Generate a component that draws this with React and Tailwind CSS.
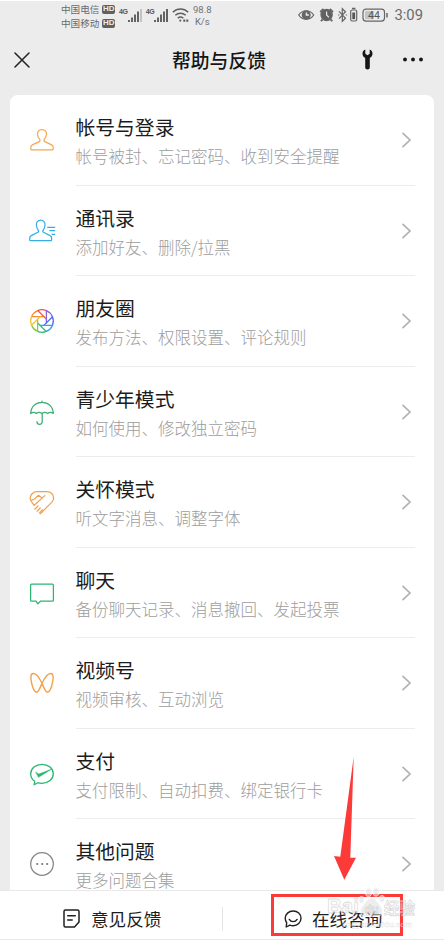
// App.jsx — WeChat help & feedback screen
const TOPICS = [
  { id: 'account', title: '帐号与登录', hint: '帐号被封、忘记密码、收到安全提醒', Icon: PersonIcon },
  { id: 'contacts', title: '通讯录', hint: '添加好友、删除/拉黑', Icon: ContactsIcon },
  { id: 'moments', title: '朋友圈', hint: '发布方法、权限设置、评论规则', Icon: MomentsIcon },
  { id: 'teen', title: '青少年模式', hint: '如何使用、修改独立密码', Icon: UmbrellaIcon },
  { id: 'care', title: '关怀模式', hint: '听文字消息、调整字体', Icon: CareIcon },
  { id: 'chat', title: '聊天', hint: '备份聊天记录、消息撤回、发起投票', Icon: ChatIcon },
  { id: 'channels', title: '视频号', hint: '视频审核、互动浏览', Icon: ChannelsIcon },
  { id: 'pay', title: '支付', hint: '支付限制、自动扣费、绑定银行卡', Icon: PayIcon },
  { id: 'other', title: '其他问题', hint: '更多问题合集', Icon: OtherIcon },
];

/* Row icons, all on a 28px grid */
function Glyph({ color, width = 1.25, children }) {
  return (
    <svg className="block w-7 h-7 overflow-visible" viewBox="0 0 28 28" fill="none" stroke={color} strokeWidth={width} strokeLinecap="round" strokeLinejoin="round">
      {children}
    </svg>
  );
}

function PersonIcon() {
  return (
    <Glyph color="#f5a653">
      <path d="M14 3.500c-3 0-4.700 2.100-4.500 5 .2 2.200 1 3.600 2.300 5.200.5.8.2 1.500-.6 1.900l-6.800 3.300c-1.200.6-1.600 1.300-1.600 2.500v1.700c0 .5.300.7.800.7h20.800c.5 0 .8-.2.8-.7v-1.700c0-1.200-.4-1.900-1.600-2.500l-6.800-3.300c-.8-.4-1.100-1.100-.6-1.900 1.300-1.600 2.100-3 2.300-5.200.2-2.900-1.500-5-4.500-5z" />
    </Glyph>
  );
}

function ContactsIcon() {
  return (
    <Glyph color="#35aee5">
      <path d="M12.700 3.200c-3 0-4.500 2.100-4.300 5 .2 2.200.8 3.600 2 5.200.5.8.2 1.500-.6 1.900L3.300 18.600c-1.200.6-1.600 1.300-1.600 2.500v1.800c0 .5.300.7.800.7h20.300c.5 0 .8-.2.8-.7v-1.800c0-1.200-.4-1.900-1.600-2.500l-6.400-3.300c-.8-.4-1.100-1.100-.6-1.900 1.200-1.600 1.800-3 2-5.200.2-2.900-1.300-5-4.300-5z" />
      <path d="M19.200 10.400h8M21.300 13.700h5.900M23.600 17.300h3.600" strokeLinecap="butt" />
    </Glyph>
  );
}

// clockwise, starting from the left-hand end of the top blade
const BLADES = ['#f98a3c', '#f0564a', '#8d62d8', '#4b6ef0', '#3a9dea', '#35b87a', '#84cc48', '#f7c52e'];

function MomentsIcon() {
  return (
    <Glyph width={1.3}>
      {BLADES.map((color, i) => (
        <path key={color} stroke={color} transform={`rotate(${i * 45} 14 14)`} d="M15.800 9.600H3.600A11.300 11.300 0 0 1 9.760 3.530" />
      ))}
    </Glyph>
  );
}

function UmbrellaIcon() {
  return (
    <Glyph color="#3fae73">
      <path d="M14 3v1.200M2.700 15.500C2.900 8.700 7.700 4.300 14 4.300s11.100 4.400 11.300 11.200c-1.700-1.300-4-1.300-5.600 0-1.700-1.300-4-1.300-5.700 0-1.700-1.300-4-1.300-5.700 0-1.600-1.300-3.900-1.300-5.600 0z" />
      <path d="M14.200 15.500v8c0 1.700-1 2.800-2.600 2.800s-2.600-1-2.600-2.600" />
    </Glyph>
  );
}

function CareIcon() {
  return (
    <Glyph color="#f3a14f">
      <path d="M6.200 17.300l-2.300-3C2.700 12.700 2 11.300 2.200 9.700c0-1.500.9-3 2.100-4.200C5.500 4.300 7 3.700 8.700 3.700h10.600c1.700 0 3.200.6 4.400 1.800 1.200 1.200 1.900 2.700 1.900 4.400 0 1.700-.6 3-1.700 4.200L12.600 25.500" />
      <path d="M2.600 11.700c1.200.6 2.400.3 3.600-.6L10.500 7.300l3.300 2.500M16.800 7.600L6.200 17.300M10 18l-3.200 3.200M12.200 20l-3.200 3.200M14.500 21.800l-3.200 3.300" />
    </Glyph>
  );
}

function ChatIcon() {
  return (
    <Glyph color="#2bb673">
      <path d="M3.600 5h20.800c.6 0 1 .4 1 1v15.200c0 .6-.4 1-1 1H12.500l-2.700 2.700-1.700-2.700H3.600c-.6 0-1-.4-1-1V6c0-.6.4-1 1-1z" />
    </Glyph>
  );
}

function ChannelsIcon() {
  return (
    <Glyph color="#f5a04a" width={1.4}>
      <path d="M14 14.300C11.700 9.500 8.300 4.500 5.300 4.500c-3 0-2.800 4.300-1.800 9 1 4.900 2.800 9.700 5 9.700 2 0 3.400-3.800 5.500-8.900 2.300-4.800 5.700-9.800 8.700-9.800s2.800 4.300 1.800 9c-1 4.900-2.800 9.700-5 9.700-2 0-3.400-3.800-5.500-8.900z" />
    </Glyph>
  );
}

function PayIcon() {
  return (
    <Glyph color="#28b770" width={1.3}>
      <path d="M14 4.300c6.300 0 11.300 4.100 11.300 9.400S20.300 23.300 14 23.300c-1.500 0-2.900-.2-4.200-.6L6.200 24.800l.5-3.500c-2.500-1.700-4-4.400-4-7.600C2.700 8.400 7.700 4.300 14 4.300z" />
      <path d="M7.900 12.300l3 1.800 13-5.100-13.300 8.300z" fill="#28b770" strokeWidth=".5" />
    </Glyph>
  );
}

function OtherIcon() {
  return (
    <Glyph color="#858585">
      <circle cx="14" cy="14" r="11.300" />
      <g fill="#777" stroke="none">
        <circle cx="9.200" cy="14" r="1.100" />
        <circle cx="14.200" cy="14" r="1.100" />
        <circle cx="19.200" cy="14" r="1.100" />
      </g>
    </Glyph>
  );
}

/* Status bar */
function Carrier({ name }) {
  return (
    <div className="flex items-center gap-[3px] h-3.5 text-[9.600px] leading-[14px] whitespace-nowrap text-[#6b6b6b]">
      {name}
      <span className="flex shrink-0 items-center justify-center w-[13px] h-[9px] rounded-[2px] bg-[#606060] font-['Liberation_Sans'] text-[8px] leading-none font-bold text-[#ececec]">HD</span>
    </div>
  );
}

function Signal({ faint }) {
  return (
    <div className="flex items-start">
      <span className="font-['Liberation_Sans'] text-[7px] leading-[8px] font-bold tracking-tighter text-[#555]">4G</span>
      <svg className="w-[15px] h-[15px]" viewBox="0 0 15 15" fill="#646464">
        <rect x="0" y="12" width="2" height="2" />
        <rect x="3" y="9.500" width="2" height="4.500" />
        <rect x="6" y="6.500" width="2" height="7.500" />
        <rect x="9" y="3.500" width="2" height="10.500" />
        <rect x="12" y="1" width="2" height="13" opacity={faint ? 0.3 : 1} />
      </svg>
    </div>
  );
}

function StatusIcons() {
  return (
    <svg className="w-[90px] h-5" viewBox="0 0 90 20" fill="none" stroke="#666" strokeWidth="1.200">
      {/* eye */}
      <path d="M.7 10C4.500 4.300 12 4.300 15.700 10 12 15.700 4.500 15.700.7 10z" />
      <circle cx="8.200" cy="10" r="3.900" fill="#666" />
      <path d="M8.400 7.500v2.500h2.500" stroke="#ececec" strokeWidth="1.400" />
      {/* alarm */}
      <circle cx="28.600" cy="10" r="5.600" fill="#606060" />
      <path d="M22.200 7l3.300-3.200M35 7l-3.300-3.200M24.600 14.500l-1.700 1.700M32.600 14.500l1.700 1.700" strokeWidth="1.800" />
      <path d="M28.600 6.500V10l2.300 2.300" stroke="#ececec" />
      {/* bluetooth and its battery */}
      <path d="M41 6.300l6.500 7-3.200 3V3.700l3.200 3-6.500 7M40 10h1.300M47.800 10h1.300" strokeWidth="1.200" />
      <rect x="52.700" y="5" width="6" height="11" rx="1.500" />
      <path d="M54 3.500h3.400" strokeWidth="1.500" />
      <path d="M54.300 7.500h2.800v6.700h-2.800z" fill="#555" stroke="none" />
      {/* phone battery */}
      <rect x="65" y="4.100" width="21.500" height="12" rx="3" />
      <rect x="67" y="6" width="9" height="8.200" rx="1" fill="#c4c4c4" stroke="none" />
      <path d="M89 8v4.500" strokeWidth="1.500" />
      <text x="70" y="13.800" fill="#555" stroke="none" fontSize="10.500" fontFamily="Roboto, sans-serif">44</text>
    </svg>
  );
}

function StatusBar() {
  return (
    <div className="flex items-start h-[30px] pl-[61px]">
      <div className="w-[55px] shrink-0 pt-px">
        <Carrier name="中国电信" />
        <Carrier name="中国移动" />
      </div>
      <div className="flex gap-[3px] pt-[7px] pl-[3px]">
        <Signal faint />
        <Signal />
      </div>
      <svg className="ml-[3px] mt-[7px] w-[17px] h-[15px]" viewBox="0 0 17 15" fill="none" stroke="#606060" strokeWidth="1.500">
        <path d="M.8 4.300c4.500-4.300 10.900-4.300 15.400 0M3.300 7.300c3-2.900 7.400-2.900 10.400 0M5.700 10.200c1.700-1.500 3.900-1.500 5.600 0" />
        <circle cx="8.300" cy="12.600" r="1.100" fill="#606060" stroke="none" />
        <path d="M11.300 12.700h5" strokeWidth="2.200" strokeDasharray="2 1" />
      </svg>
      <div className="w-5 ml-[3px] pt-[3px] font-['Roboto'] text-[9.500px] leading-[11.500px] text-center text-[#727272]">
        <p>98.8</p>
        <p>K/s</p>
      </div>
      <div className="ml-auto mr-[21px] pt-[4px] flex items-center gap-[6px]">
        <StatusIcons />
        <span className="font-['Roboto'] text-[14.800px] leading-5 text-[#6a6a6a]">3:09</span>
      </div>
    </div>
  );
}

function TitleBar() {
  return (
    <header className="grid grid-cols-[1fr_auto_1fr] items-center h-[57px] pl-[14px] pr-[21px]">
      <svg className="w-4 h-4" viewBox="0 0 16 16" stroke="#222" strokeWidth="1.500" strokeLinecap="round">
        <path d="M1 1l14 14M15 1L1 15" />
      </svg>
      <h1 className="ml-[1px] text-[18.800px] leading-7 font-medium text-[#151515]">帮助与反馈</h1>
      <div className="flex items-center justify-end gap-[30px]">
        <svg className="w-[11px] h-[21px]" viewBox="0 0 11 21" fill="#171717">
          <path d="M3.300.4v4.400l2.200 1.400 2.200-1.400V.4C9.700 1.200 10.700 3 10.500 5c-.2 1.900-1.200 3.300-2.700 4v9.200c0 1.300-1 2.300-2.300 2.300s-2.300-1-2.300-2.300V9C1.700 8.300.7 6.900.5 5 .3 3 1.300 1.200 3.300.4z" />
        </svg>
        <svg className="w-5 h-[5px]" viewBox="0 0 20 5" fill="#171717">
          <circle cx="2" cy="2.500" r="1.900" />
          <circle cx="10" cy="2.500" r="1.900" />
          <circle cx="18" cy="2.500" r="1.900" />
        </svg>
      </div>
    </header>
  );
}

function TopicRow({ topic }) {
  const { title, hint, Icon } = topic;
  return (
    <li className="group flex h-[90.500px] px-[19px]">
      <div className="-ml-[.7px] w-[47.700px] shrink-0 pt-[31px]"><Icon /></div>
      <div className="flex flex-1 min-w-0 items-start border-b border-[#ececec] group-last:border-0">
        <div className="flex-1 min-w-0 pt-[17px] whitespace-nowrap">
          <h2 className="text-[19.800px] leading-[30px] text-[#1c1c1c]">{title}</h2>
          <p className="text-[16.500px] leading-[26px] mt-[1px] font-light text-[#9d9d9d]">{hint}</p>
        </div>
        <svg className="mt-[37px] mr-[3.500px] w-[9px] h-4" viewBox="0 0 9 16" fill="none" stroke="#b2b2b2" strokeWidth="1.700" strokeLinecap="round">
          <path d="M1 1.300l7 6.700-7 6.700" />
        </svg>
      </div>
    </li>
  );
}

function BottomBar() {
  return (
    <footer className="flex h-[50px] shrink-0 items-center border-y border-[#e9e9e9] bg-white pt-[7px] text-[17.600px] leading-7 text-[#1d1d1d]">
      <button className="flex w-[222px] items-center gap-[11px] pl-[63px]">
        <svg className="w-[17px] h-[19px]" viewBox="0 0 17 19" fill="none" stroke="#202020" strokeWidth="1.500" strokeLinecap="round" strokeLinejoin="round">
          <path d="M2.500 1h12c.8 0 1.500.7 1.500 1.500V13l-4.500 5h-9C1.700 18 1 17.300 1 16.500v-14C1 1.700 1.700 1 2.500 1zM4.700 6.700h7.600M4.700 11h4.500" />
        </svg>
        意见反馈
      </button>
      <span className="h-6 w-px bg-[#e5e5e5]" />
      <button className="flex items-center gap-[10px] pl-[61px]">
        <svg className="w-[18px] h-[18px]" viewBox="0 0 18 18" fill="none" stroke="#202020" strokeWidth="1.400" strokeLinecap="round" strokeLinejoin="round">
          <path d="M9.200 1c4.400 0 7.800 3.200 7.800 7.300s-3.400 7.400-7.800 7.400c-1.200 0-2.300-.2-3.300-.6L2.200 17l.5-4.300C1.700 11.500 1.200 10 1.200 8.300 1.200 4.200 4.700 1 9.200 1zM5.300 9.400c1.700 3 6 3 7.800 0" />
        </svg>
        在线咨询
      </button>
    </footer>
  );
}

/* Watermark, highlight box and arrow lie over the screen */
function Annotation() {
  return (
    <div className="pointer-events-none absolute inset-0">
      <div className="absolute left-[271px] top-[893px] w-[132px] h-[42px] border-[3px] border-[#fc3a38]" />
      <svg className="absolute left-[333px] top-[755px] w-[24px] h-[125px]" viewBox="0 0 24 125" fill="#fc3a38">
        <path d="M20.700.700L17.300 101.700H23L11.300 123.700 1 100l6.300.700z" />
      </svg>
      <svg className="absolute left-[326px] top-[883px] w-[92px] h-[45px]" viewBox="0 0 92 45" fill="#fff" fillOpacity=".4" stroke="#bdbdbd" strokeOpacity=".55" strokeWidth=".8" fontFamily="'Liberation Sans', 'Noto Sans CJK SC', sans-serif" fontWeight="700">
        <text x="1" y="29" fontSize="20.500">Bai</text>
        <g fill="#dedede" fillOpacity=".55" stroke="#fff" strokeOpacity=".8">
          <ellipse cx="35.500" cy="16" rx="2.700" ry="3.600" />
          <ellipse cx="42.500" cy="8.500" rx="3" ry="4.200" />
          <ellipse cx="50" cy="8" rx="3" ry="4.200" />
          <ellipse cx="56" cy="15" rx="2.700" ry="3.600" />
          <path d="M45.500 14c4 0 5.500 4 8.500 7.500 4.500 4.500 2.500 11-3 11-4 0-8 0-11 0-6 0-7.500-6.500-3-11 3-3.500 4.500-7.500 8.500-7.500z" />
        </g>
        <text x="38.500" y="29" fontSize="11.500">du</text>
        <text x="58" y="30" fontSize="15.500">经验</text>
        <text x="16" y="43" fontSize="8" strokeWidth=".3">jingyan.baidu.com</text>
      </svg>
    </div>
  );
}

export default function App() {
  return (
    <div className="relative flex flex-col w-[444px] h-[940px] overflow-hidden border-t border-white bg-[#ececec] font-['Noto_Sans_CJK_SC',sans-serif]">
      <StatusBar />
      <TitleBar />
      <main className="flex-1 min-h-0 overflow-hidden pl-[9.500px] pr-[10.500px] pt-[7px]">
        <ul className="h-full rounded-t-[8px] bg-white">
          {TOPICS.map((t) => <TopicRow key={t.id} topic={t} />)}
        </ul>
      </main>
      <BottomBar />
      <Annotation />
    </div>
  );
}
